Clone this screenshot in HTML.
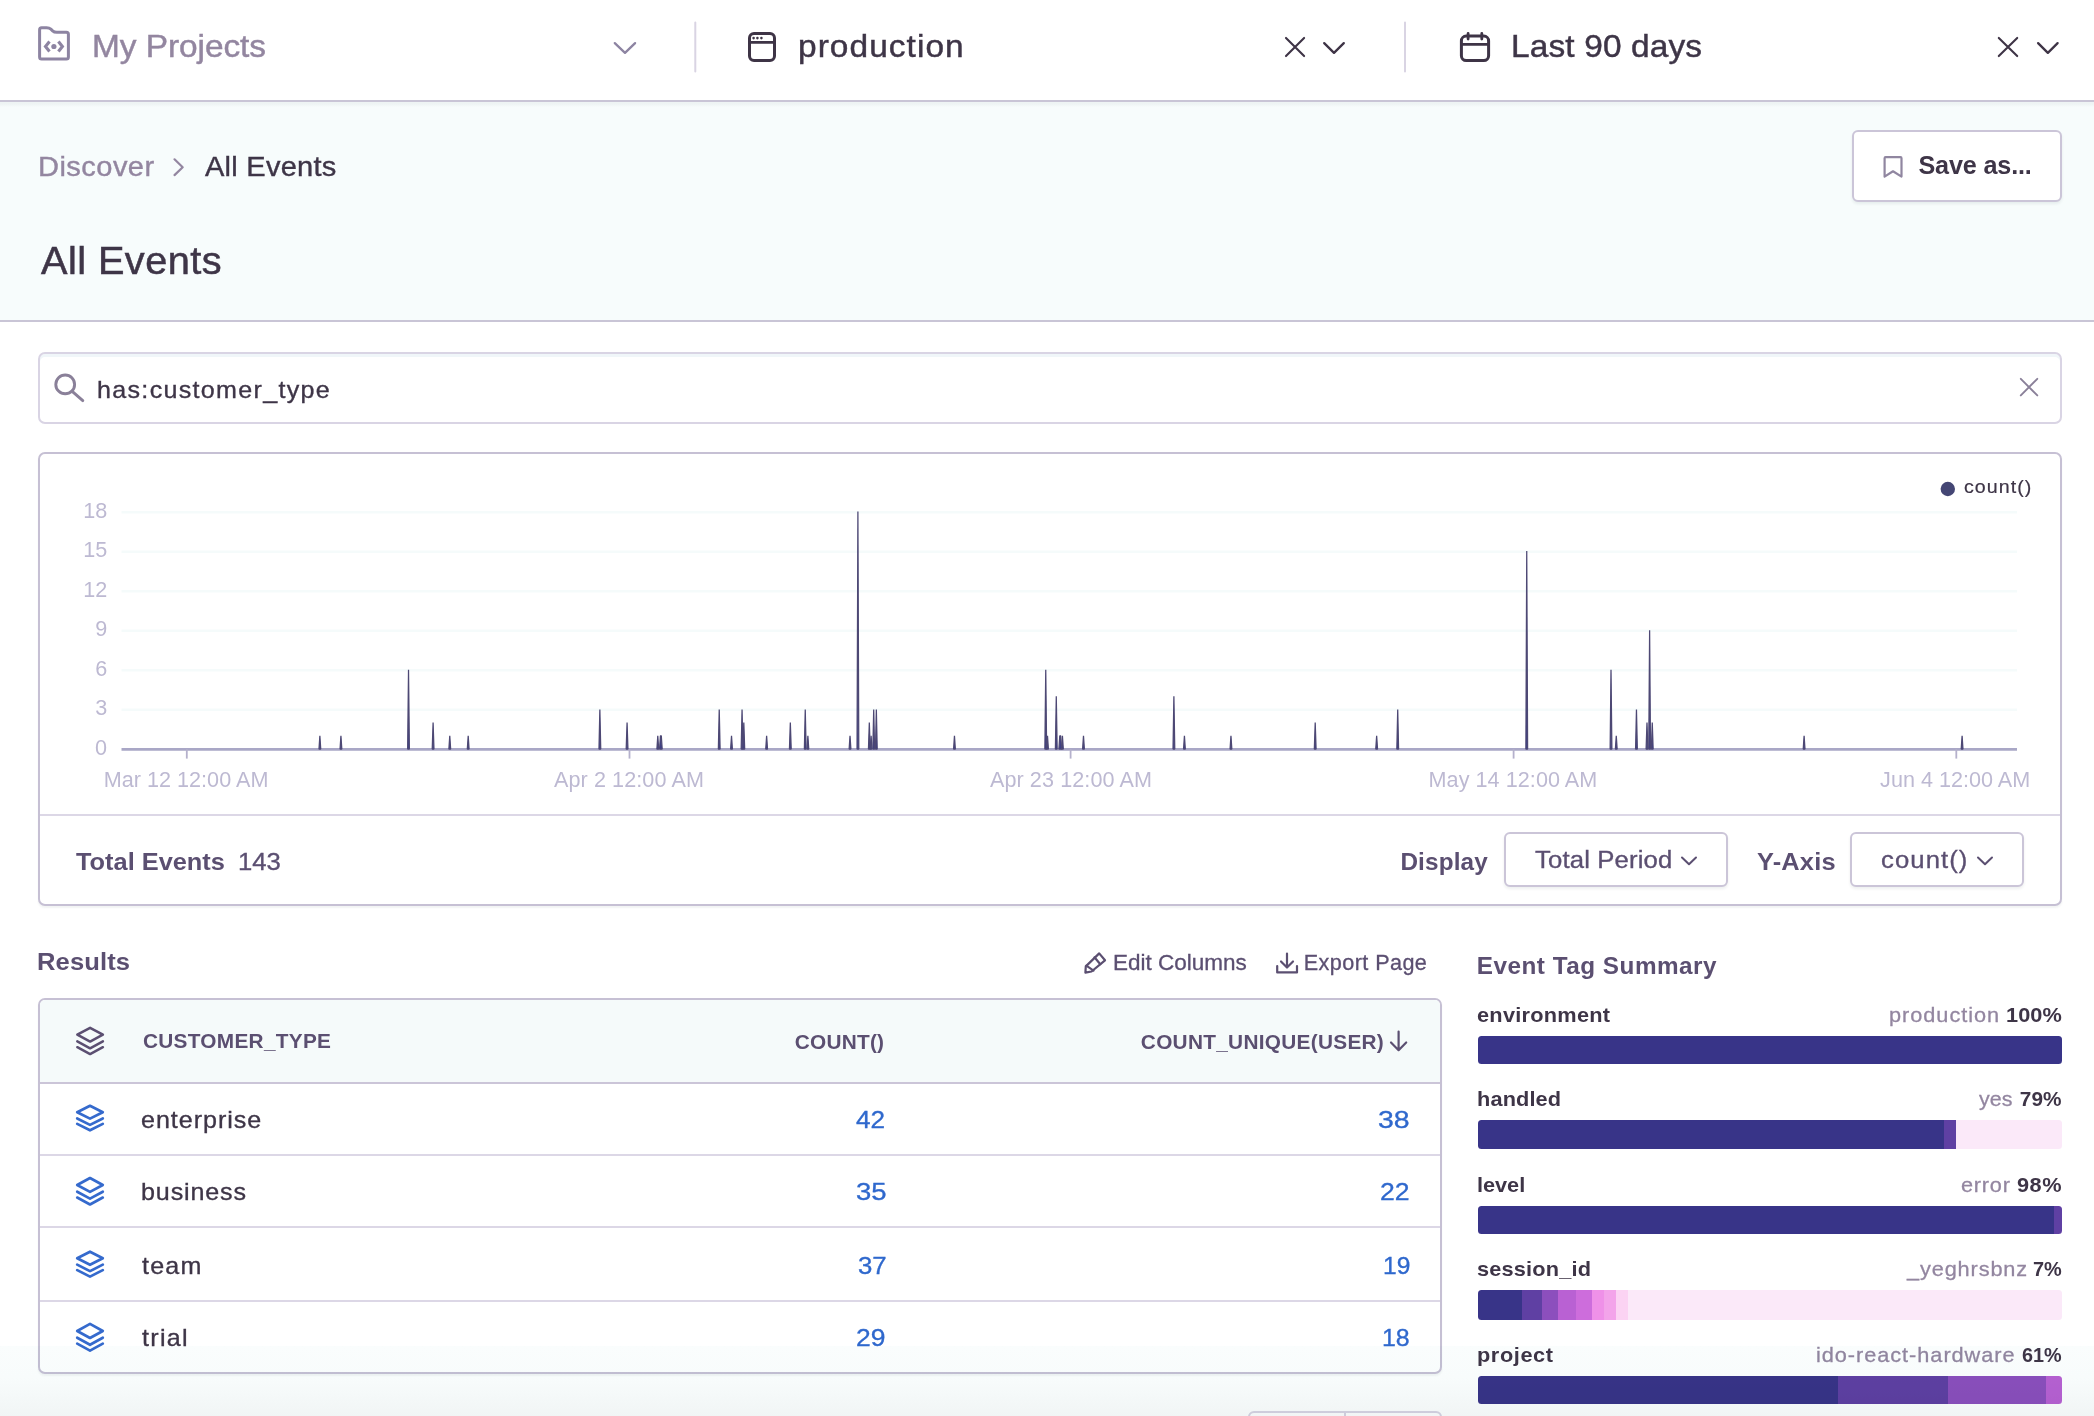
<!DOCTYPE html>
<html lang="en"><head><meta charset="utf-8"><title>Discover - All Events</title>
<style>
html,body{margin:0;padding:0;}
body{width:2094px;height:1416px;position:relative;overflow:hidden;background:#fff;font-family:"Liberation Sans",sans-serif;color:#3e3446;}
.t{position:absolute;white-space:nowrap;line-height:1;margin:0;padding:0;font-weight:normal;}
.abs{position:absolute;}
svg{position:absolute;overflow:visible;}
.box{position:absolute;box-sizing:border-box;}
</style></head><body>
<header class="box" style="left:0;top:0;width:2094px;height:102px;background:#fff;border-bottom:2px solid #c9c5d6;"></header>
<div class="box" style="left:0;top:102px;width:2094px;height:220px;background:linear-gradient(to bottom,#eef4f4 0,#eef4f4 2px,#f7fcfc 5px);background-color:#f7fcfc;border-bottom:2px solid #c9c5d6;"></div>
<nav aria-label="Global selection header">
<svg style="left:0;top:0" width="2094" height="101" fill="none" stroke-linecap="round" stroke-linejoin="round">
<g stroke="#8d84a2" stroke-width="3">
<path d="M39.6 29.8 Q39.6 27.8 41.6 27.8 L46.6 27.8 Q49.3 27.8 50.9 29.2 L52.6 30.8 Q54.2 32.3 56.8 32.3 L66.4 32.3 Q68.4 32.3 68.4 34.3 L68.4 57 Q68.4 59 66.4 59 L41.6 59 Q39.6 59 39.6 57 Z"/>
<path d="M49.5 41.5 L45.5 46.5 L49.5 51.5" stroke-width="3.1" stroke-linecap="butt" stroke-linejoin="miter"/>
<path d="M58.4 41.5 L62.4 46.5 L58.4 51.5" stroke-width="3.1" stroke-linecap="butt" stroke-linejoin="miter"/>
<circle cx="53.9" cy="46.5" r="2.6" fill="#8d84a2" stroke="none"/>
<path d="M614.8 43.1 L625 52.9 L635.1 43.1" stroke-width="2.3"/>
</g>
<g stroke="#3e3446" stroke-width="3">
<rect x="749.5" y="33.5" width="25" height="27" rx="4.5"/>
<path d="M749.5 42.4 H774.5" stroke-width="2.6"/>
<circle cx="753.6" cy="38.1" r="1.3" fill="#3e3446" stroke="none"/><circle cx="757.4" cy="38.1" r="1.3" fill="#3e3446" stroke="none"/><circle cx="761.4" cy="38.1" r="1.3" fill="#3e3446" stroke="none"/>
<path d="M1286 37.9 L1304.1 56.1 M1304.1 37.9 L1286 56.1" stroke-width="2.1"/>
<path d="M1324.2 43.1 L1334 52.9 L1343.8 43.1" stroke-width="2.3"/>
<rect x="1461.4" y="36.1" width="27.2" height="24.5" rx="4.8"/>
<path d="M1461.4 44.4 H1488.4" stroke-width="2.6"/>
<path d="M1468.1 33.4 V39 M1481.8 33.4 V39" stroke-width="2.8"/>
<path d="M1998.8 37.9 L2017.2 56.1 M2017.2 37.9 L1998.8 56.1" stroke-width="2.1"/>
<path d="M2038.1 43.1 L2047.85 52.9 L2057.6 43.1" stroke-width="2.3"/>
</g>
<path d="M695.3 22.5 V71.5 M1405 22.5 V71.5" stroke="#d9d4e3" stroke-width="2"/>
</svg>
<span class="t" style="left:91.76px;top:30.00px;font-size:32px;letter-spacing:-0.057px;-webkit-text-stroke:0.45px #9386a0;transform:scaleX(1.0450);transform-origin:0 0;color:#9386a0;">My Projects</span>
<span class="t" style="left:797.51px;top:30.00px;font-size:32px;letter-spacing:1.007px;-webkit-text-stroke:0.45px #3e3547;transform:scaleX(1.0450);transform-origin:0 0;color:#3e3547;">production</span>
<span class="t" style="left:1510.78px;top:30.00px;font-size:32px;letter-spacing:0.126px;-webkit-text-stroke:0.45px #3e3547;transform:scaleX(1.0450);transform-origin:0 0;color:#3e3547;">Last 90 days</span>
</nav>
<main>
<span class="t" style="left:38.17px;top:152.57px;font-size:27.8px;letter-spacing:0.432px;-webkit-text-stroke:0.39px #9386a0;transform:scaleX(1.0450);transform-origin:0 0;color:#9386a0;">Discover</span>
<svg style="left:0;top:0" width="400" height="300" fill="none" stroke="#9386a0" stroke-width="2.2" stroke-linecap="round" stroke-linejoin="round"><path d="M174.5 159.3 L182.7 167.2 L174.5 175.1"/></svg>
<span class="t" style="left:205.10px;top:152.57px;font-size:27.8px;letter-spacing:0.231px;-webkit-text-stroke:0.39px #3e3547;transform:scaleX(1.0450);transform-origin:0 0;color:#3e3547;">All Events</span>
<h1 class="t" style="left:41.00px;top:242.32px;font-size:38px;letter-spacing:0.423px;-webkit-text-stroke:0.53px #3e3547;transform:scaleX(1.0450);transform-origin:0 0;color:#3e3547;">All Events</h1>
<div class="box" style="left:1852px;top:130px;width:210px;height:72px;background:#fff;border:2px solid #cbc5d8;border-radius:6px;box-shadow:0 2px 3px rgba(40,60,60,0.08);"></div>
<svg style="left:0;top:0" width="2094" height="300" fill="none" stroke="#9086a0" stroke-width="2.2" stroke-linecap="round" stroke-linejoin="round"><path d="M1885.6 157.2 H1900.5 Q1901.5 157.2 1901.5 158.2 V176.6 L1893 171.3 L1884.6 176.6 V158.2 Q1884.6 157.2 1885.6 157.2 Z"/></svg>
<span class="t" style="left:1918.47px;top:152.67px;font-size:25.2px;letter-spacing:-0.159px;font-weight:bold;color:#3e3547;">Save as...</span>
<section aria-label="Search">
<div class="box" style="left:38px;top:352px;width:2024px;height:72px;background:#fff;border:2px solid #d9d4e4;border-radius:7px;box-shadow:inset 0 3px 0 #f0f6f9;"></div>
<svg style="left:0;top:300px" width="2094" height="150" fill="none" stroke="#8a8099" stroke-width="2.9" stroke-linecap="round"><circle cx="65.2" cy="84.4" r="9.4"/><path d="M72.2 91.4 L82.8 100.6"/><path d="M2020.8 78.8 L2037.3 95.4 M2037.3 78.8 L2020.8 95.4" stroke-width="1.9"/></svg>
<span class="t" style="left:96.50px;top:377.68px;font-size:24px;letter-spacing:1.251px;-webkit-text-stroke:0.34px #3e3547;transform:scaleX(1.0450);transform-origin:0 0;color:#3e3547;">has:customer_type</span>
</section>
<section aria-label="Chart">
<div class="box" style="left:38px;top:452px;width:2024px;height:454px;background:#fff;border:2px solid #c6c0d4;border-radius:7px;box-shadow:0 2px 2px rgba(40,60,60,0.06);"></div>
<div class="box" style="left:40px;top:814px;width:2020px;height:2px;background:#dcd7e6;"></div>
<svg style="left:0;top:0" width="2094" height="820" fill="none"><path d="M121.5 709.79 H2017" stroke="#f5fbfb" stroke-width="2.4"/><path d="M121.5 670.28 H2017" stroke="#f5fbfb" stroke-width="2.4"/><path d="M121.5 630.77 H2017" stroke="#f5fbfb" stroke-width="2.4"/><path d="M121.5 591.26 H2017" stroke="#f5fbfb" stroke-width="2.4"/><path d="M121.5 551.75 H2017" stroke="#f5fbfb" stroke-width="2.4"/><path d="M121.5 512.24 H2017" stroke="#f5fbfb" stroke-width="2.4"/>
<path d="M121.5 749.4 H2017" stroke="#a9a7c6" stroke-width="2.6"/><path d="M186.8 749.3 V758.5999999999999" stroke="#b5b1cc" stroke-width="1.8"/><path d="M629.5 749.3 V758.5999999999999" stroke="#b5b1cc" stroke-width="1.8"/><path d="M1070.6 749.3 V758.5999999999999" stroke="#b5b1cc" stroke-width="1.8"/><path d="M1513.6 749.3 V758.5999999999999" stroke="#b5b1cc" stroke-width="1.8"/><path d="M1956.3 749.3 V758.5999999999999" stroke="#b5b1cc" stroke-width="1.8"/>
<g fill="#383c8c" stroke="#4d4874" stroke-width="1.25" stroke-linejoin="bevel"><path d="M318.99 749.0 L319.87 735.80 L320.74 749.0 Z"/><path d="M340.05 749.0 L340.93 735.80 L341.81 749.0 Z"/><path d="M407.64 749.0 L408.52 669.80 L409.39 749.0 Z"/><path d="M432.22 749.0 L433.09 722.60 L433.97 749.0 Z"/><path d="M448.89 749.0 L449.77 735.80 L450.65 749.0 Z"/><path d="M467.32 749.0 L468.20 735.80 L469.08 749.0 Z"/><path d="M598.98 749.0 L599.86 709.40 L600.74 749.0 Z"/><path d="M626.19 749.0 L627.07 722.60 L627.95 749.0 Z"/><path d="M656.91 749.0 L657.79 735.80 L658.67 749.0 Z"/><path d="M659.55 749.0 L660.43 735.80 L661.30 735.80 L662.18 749.0 Z"/><path d="M718.36 749.0 L719.23 709.40 L720.11 749.0 Z"/><path d="M730.64 749.0 L731.52 735.80 L732.40 749.0 Z"/><path d="M741.18 749.0 L742.05 709.40 L742.93 749.0 Z"/><path d="M742.93 749.0 L743.81 722.60 L744.69 749.0 Z"/><path d="M765.75 749.0 L766.63 735.80 L767.51 749.0 Z"/><path d="M789.45 749.0 L790.33 722.60 L791.21 749.0 Z"/><path d="M804.37 749.0 L805.25 709.40 L806.13 749.0 Z"/><path d="M807.01 749.0 L807.88 735.80 L808.76 749.0 Z"/><path d="M849.14 749.0 L850.01 735.80 L850.89 749.0 Z"/><path d="M857.04 749.0 L857.91 511.40 L858.79 749.0 Z"/><path d="M868.45 749.0 L869.32 722.60 L870.20 749.0 Z"/><path d="M870.20 749.0 L871.08 735.80 L871.96 749.0 Z"/><path d="M872.84 749.0 L873.71 709.40 L874.59 749.0 Z"/><path d="M875.47 749.0 L876.35 709.40 L877.22 749.0 Z"/><path d="M953.59 749.0 L954.46 735.80 L955.34 749.0 Z"/><path d="M1044.87 749.0 L1045.75 669.80 L1046.63 749.0 Z"/><path d="M1046.63 749.0 L1047.50 735.80 L1048.38 749.0 Z"/><path d="M1055.40 749.0 L1056.28 696.20 L1057.16 749.0 Z"/><path d="M1058.91 749.0 L1059.79 735.80 L1060.67 735.80 L1061.55 749.0 Z"/><path d="M1061.55 749.0 L1062.42 735.80 L1063.30 749.0 Z"/><path d="M1082.61 749.0 L1083.49 735.80 L1084.37 749.0 Z"/><path d="M1173.02 749.0 L1173.90 696.20 L1174.77 749.0 Z"/><path d="M1183.55 749.0 L1184.43 735.80 L1185.31 749.0 Z"/><path d="M1230.07 749.0 L1230.95 735.80 L1231.83 749.0 Z"/><path d="M1314.33 749.0 L1315.21 722.60 L1316.09 749.0 Z"/><path d="M1375.77 749.0 L1376.65 735.80 L1377.53 749.0 Z"/><path d="M1396.84 749.0 L1397.72 709.40 L1398.59 749.0 Z"/><path d="M1525.87 749.0 L1526.74 551.00 L1527.62 749.0 Z"/><path d="M1610.13 749.0 L1611.00 669.80 L1611.88 749.0 Z"/><path d="M1615.39 749.0 L1616.27 735.80 L1617.15 749.0 Z"/><path d="M1635.58 749.0 L1636.46 709.40 L1637.34 749.0 Z"/><path d="M1646.11 749.0 L1646.99 722.60 L1647.87 749.0 Z"/><path d="M1648.75 749.0 L1649.62 630.20 L1650.50 749.0 Z"/><path d="M1651.38 749.0 L1652.26 722.60 L1653.14 749.0 Z"/><path d="M1803.23 749.0 L1804.10 735.80 L1804.98 749.0 Z"/><path d="M1961.22 749.0 L1962.10 735.80 L1962.97 749.0 Z"/></g>
<circle cx="1947.8" cy="489" r="7.2" fill="#444674"/>
</svg>
<span class="t" style="left:95.05px;top:737.08px;font-size:21.6px;color:#bdb9d2;">0</span>
<span class="t" style="left:95.17px;top:696.81px;font-size:21.6px;color:#bdb9d2;">3</span>
<span class="t" style="left:95.17px;top:658.04px;font-size:21.6px;color:#bdb9d2;">6</span>
<span class="t" style="left:95.30px;top:617.79px;font-size:21.6px;color:#bdb9d2;">9</span>
<span class="t" style="left:83.29px;top:578.78px;font-size:21.6px;color:#bdb9d2;">12</span>
<span class="t" style="left:83.16px;top:538.77px;font-size:21.6px;color:#bdb9d2;">15</span>
<span class="t" style="left:83.16px;top:499.97px;font-size:21.6px;color:#bdb9d2;">18</span>
<span class="t" style="left:103.66px;top:768.72px;font-size:21.6px;letter-spacing:0.024px;color:#bdb9d2;">Mar 12 12:00 AM</span>
<span class="t" style="left:553.92px;top:768.72px;font-size:21.6px;letter-spacing:0.093px;color:#bdb9d2;">Apr 2 12:00 AM</span>
<span class="t" style="left:989.91px;top:768.72px;font-size:21.6px;letter-spacing:0.087px;color:#bdb9d2;">Apr 23 12:00 AM</span>
<span class="t" style="left:1428.55px;top:768.72px;font-size:21.6px;letter-spacing:0.051px;color:#bdb9d2;">May 14 12:00 AM</span>
<span class="t" style="left:1880.10px;top:768.72px;font-size:21.6px;color:#bdb9d2;">Jun 4 12:00 AM</span>
<span class="t" style="left:1964.12px;top:477.69px;font-size:18.8px;letter-spacing:0.994px;-webkit-text-stroke:0.20px #3e3547;transform:scaleX(1.0450);transform-origin:0 0;color:#3e3547;">count()</span>
<span class="t" style="left:76.24px;top:849.88px;font-size:24.3px;font-weight:bold;transform:scaleX(1.0436);transform-origin:0 0;color:#5b4f71;">Total Events</span>
<span class="t" style="left:238.24px;top:849.51px;font-size:24.2px;-webkit-text-stroke:0.34px #5b4f71;transform:scaleX(1.0619);transform-origin:0 0;color:#5b4f71;">143</span>
<span class="t" style="left:1400.38px;top:849.95px;font-size:24.3px;letter-spacing:0.167px;font-weight:bold;color:#5b4f71;">Display</span>
<span class="t" style="left:1757.47px;top:850.18px;font-size:24.3px;letter-spacing:0.171px;font-weight:bold;transform:scaleX(1.0450);transform-origin:0 0;color:#5b4f71;">Y-Axis</span>
<div class="box" style="left:1504px;top:832px;width:224px;height:55px;background:#fff;border:2px solid #cbc5d8;border-radius:6px;box-shadow:0 2px 3px rgba(40,60,60,0.08);"></div>
<div class="box" style="left:1850px;top:832px;width:174px;height:55px;background:#fff;border:2px solid #cbc5d8;border-radius:6px;box-shadow:0 2px 3px rgba(40,60,60,0.08);"></div>
<span class="t" style="left:1534.58px;top:847.54px;font-size:24.6px;letter-spacing:0.136px;-webkit-text-stroke:0.34px #5b4f71;transform:scaleX(1.0450);transform-origin:0 0;color:#5b4f71;">Total Period</span>
<span class="t" style="left:1881.05px;top:848.08px;font-size:24.6px;letter-spacing:1.028px;-webkit-text-stroke:0.34px #5b4f71;transform:scaleX(1.0450);transform-origin:0 0;color:#5b4f71;">count()</span>
<svg style="left:0;top:800px" width="2094" height="120" fill="none" stroke="#5b4f71" stroke-width="2" stroke-linecap="round" stroke-linejoin="round"><path d="M1682 57.5 L1689 64.3 L1696 57.5"/><path d="M1978 57.5 L1985 64.3 L1992 57.5"/></svg>
</section>
<section aria-label="Results">
<h2 class="t" style="left:36.79px;top:950.49px;font-size:24.6px;letter-spacing:0.101px;font-weight:bold;transform:scaleX(1.0393);transform-origin:0 0;color:#5b4f71;">Results</h2>
<svg style="left:0;top:900px" width="2094" height="100" fill="none" stroke="#5b4f71" stroke-width="2.2" stroke-linecap="round" stroke-linejoin="round">
<path d="M1099.2 53.4 L1105 60.3 L1091.5 71.5 L1085.4 72.6 L1085.8 66.4 Z"/><path d="M1094.5 57.3 L1100.3 64.2"/><path d="M1086.3 65.6 L1093.6 70.6" stroke-width="2"/>
<path d="M1287 53.5 V67 M1281 61.5 L1287 67.5 L1293 61.5"/><path d="M1277.2 66 V72.4 H1297 V66"/>
</svg>
<span class="t" style="left:1112.98px;top:951.82px;font-size:21.6px;-webkit-text-stroke:0.30px #5b4f71;transform:scaleX(1.0419);transform-origin:0 0;color:#5b4f71;">Edit Columns</span>
<span class="t" style="left:1303.75px;top:951.82px;font-size:21.6px;letter-spacing:0.427px;-webkit-text-stroke:0.30px #5b4f71;color:#5b4f71;">Export Page</span>
<h2 class="t" style="left:1476.78px;top:954.06px;font-size:24.3px;letter-spacing:0.502px;font-weight:bold;color:#5b4f71;">Event Tag Summary</h2>
<div class="box" style="left:38px;top:998px;width:1404px;height:376px;background:#fff;border:2px solid #c6c0d4;border-radius:7px;box-shadow:0 2px 2px rgba(40,60,60,0.06);overflow:hidden;"><div style="height:82px;background:#f5fafa;border-bottom:2px solid #cbc5d8;"></div></div>
<div class="box" style="left:40px;top:1154.1px;width:1400px;height:2px;background:#dcd7e6;"></div>
<div class="box" style="left:40px;top:1226.1px;width:1400px;height:2px;background:#dcd7e6;"></div>
<div class="box" style="left:40px;top:1299.6px;width:1400px;height:2px;background:#dcd7e6;"></div>
<svg style="left:0;top:0" width="1460" height="1416"><g stroke="#5b4f71" stroke-width="2.5" fill="none" stroke-linejoin="round" stroke-linecap="round"><path d="M90.1 1027.80 L102.89999999999999 1034.70 L90.1 1041.60 L77.3 1034.70 Z"/><path d="M77.3 1041.40 L90.1 1048.30 L102.89999999999999 1041.40"/><path d="M77.3 1047.20 L90.1 1054.10 L102.89999999999999 1047.20"/></g><g stroke="#356acd" stroke-width="2.7" fill="none" stroke-linejoin="round" stroke-linecap="round"><path d="M90.0 1105.78 L102.8 1112.21 L90.0 1118.64 L77.2 1112.21 Z"/><path d="M77.2 1118.46 L90.0 1124.89 L102.8 1118.46"/><path d="M77.2 1123.86 L90.0 1130.29 L102.8 1123.86"/></g><g stroke="#356acd" stroke-width="2.7" fill="none" stroke-linejoin="round" stroke-linecap="round"><path d="M90.0 1178.01 L102.8 1184.96 L90.0 1191.91 L77.2 1184.96 Z"/><path d="M77.2 1191.70 L90.0 1198.65 L102.8 1191.70"/><path d="M77.2 1197.54 L90.0 1204.49 L102.8 1197.54"/></g><g stroke="#356acd" stroke-width="2.7" fill="none" stroke-linejoin="round" stroke-linecap="round"><path d="M90.0 1251.71 L102.8 1258.26 L90.0 1264.81 L77.2 1258.26 Z"/><path d="M77.2 1264.62 L90.0 1271.17 L102.8 1264.62"/><path d="M77.2 1270.12 L90.0 1276.67 L102.8 1270.12"/></g><g stroke="#356acd" stroke-width="2.7" fill="none" stroke-linejoin="round" stroke-linecap="round"><path d="M90.0 1323.93 L102.8 1330.95 L90.0 1337.96 L77.2 1330.95 Z"/><path d="M77.2 1337.76 L90.0 1344.78 L102.8 1337.76"/><path d="M77.2 1343.66 L90.0 1350.68 L102.8 1343.66"/></g><path d="M1398.6 1031.5 V1050 M1391 1042.5 L1398.6 1050.2 L1406.2 1042.5" stroke="#5b4f71" stroke-width="2.2" fill="none" stroke-linecap="round" stroke-linejoin="round"/></svg>
<span class="t" style="left:142.95px;top:1030.89px;font-size:20.8px;letter-spacing:0.289px;font-weight:bold;color:#5b4f71;">CUSTOMER_TYPE</span>
<span class="t" style="left:794.75px;top:1031.68px;font-size:20.8px;letter-spacing:0.247px;font-weight:bold;color:#5b4f71;">COUNT()</span>
<span class="t" style="left:1140.85px;top:1031.68px;font-size:20.8px;letter-spacing:0.290px;font-weight:bold;color:#5b4f71;">COUNT_UNIQUE(USER)</span>
<span class="t" style="left:140.76px;top:1107.68px;font-size:24px;letter-spacing:0.929px;-webkit-text-stroke:0.34px #3e3547;transform:scaleX(1.0450);transform-origin:0 0;color:#3e3547;">enterprise</span>
<span class="t" style="left:855.64px;top:1108.36px;font-size:24.4px;-webkit-text-stroke:0.34px #2f68cd;transform:scaleX(1.0716);transform-origin:0 0;color:#2f68cd;">42</span>
<span class="t" style="left:1378.48px;top:1108.47px;font-size:24.4px;-webkit-text-stroke:0.34px #2f68cd;transform:scaleX(1.1651);transform-origin:0 0;color:#2f68cd;">38</span>
<span class="t" style="left:140.95px;top:1179.88px;font-size:24px;letter-spacing:0.829px;-webkit-text-stroke:0.34px #3e3547;transform:scaleX(1.0450);transform-origin:0 0;color:#3e3547;">business</span>
<span class="t" style="left:855.52px;top:1179.55px;font-size:24.4px;-webkit-text-stroke:0.34px #2f68cd;transform:scaleX(1.1256);transform-origin:0 0;color:#2f68cd;">35</span>
<span class="t" style="left:1379.73px;top:1179.55px;font-size:24.4px;-webkit-text-stroke:0.34px #2f68cd;transform:scaleX(1.0893);transform-origin:0 0;color:#2f68cd;">22</span>
<span class="t" style="left:142.07px;top:1254.43px;font-size:24px;letter-spacing:1.131px;-webkit-text-stroke:0.34px #3e3547;transform:scaleX(1.0450);transform-origin:0 0;color:#3e3547;">team</span>
<span class="t" style="left:857.58px;top:1254.09px;font-size:24.4px;-webkit-text-stroke:0.34px #2f68cd;transform:scaleX(1.0571);transform-origin:0 0;color:#2f68cd;">37</span>
<span class="t" style="left:1382.74px;top:1254.09px;font-size:24.4px;-webkit-text-stroke:0.34px #2f68cd;transform:scaleX(1.0074);transform-origin:0 0;color:#2f68cd;">19</span>
<span class="t" style="left:142.07px;top:1325.58px;font-size:24px;letter-spacing:1.245px;-webkit-text-stroke:0.34px #3e3547;transform:scaleX(1.0450);transform-origin:0 0;color:#3e3547;">trial</span>
<span class="t" style="left:855.74px;top:1326.28px;font-size:24.4px;-webkit-text-stroke:0.34px #2f68cd;transform:scaleX(1.0838);transform-origin:0 0;color:#2f68cd;">29</span>
<span class="t" style="left:1382.21px;top:1326.28px;font-size:24.4px;-webkit-text-stroke:0.34px #2f68cd;transform:scaleX(1.0227);transform-origin:0 0;color:#2f68cd;">18</span>
</section>
<aside aria-label="Event Tag Summary">
<span class="t" style="left:1477.12px;top:1005.14px;font-size:20.8px;letter-spacing:0.252px;font-weight:bold;transform:scaleX(1.0450);transform-origin:0 0;color:#3e3547;">environment</span>
<span class="t" style="left:2005.79px;top:1005.14px;font-size:20.8px;letter-spacing:0.074px;font-weight:bold;transform:scaleX(1.0450);transform-origin:0 0;color:#3e3547;">100%</span>
<span class="t" style="left:1888.99px;top:1005.25px;font-size:20.8px;letter-spacing:0.921px;-webkit-text-stroke:0.29px #9386a0;transform:scaleX(1.0450);transform-origin:0 0;color:#9386a0;">production</span>
<div class="box" style="left:1478px;top:1036px;width:584px;height:28px;border-radius:3.5px;background:#fbe9f9;overflow:hidden;display:flex;"><div style="width:100%;height:100%;background:#383488;"></div></div>
<span class="t" style="left:1477.27px;top:1088.76px;font-size:20.8px;letter-spacing:0.127px;font-weight:bold;transform:scaleX(1.0450);transform-origin:0 0;color:#3e3547;">handled</span>
<span class="t" style="left:2019.83px;top:1088.76px;font-size:20.8px;letter-spacing:0.070px;font-weight:bold;color:#3e3547;">79%</span>
<span class="t" style="left:1979.10px;top:1088.87px;font-size:20.8px;-webkit-text-stroke:0.29px #9386a0;transform:scaleX(1.0310);transform-origin:0 0;color:#9386a0;">yes</span>
<div class="box" style="left:1478px;top:1120px;width:584px;height:29px;border-radius:3.5px;background:#fbe9f9;overflow:hidden;display:flex;"><div style="width:79.8%;height:100%;background:#383488;"></div><div style="width:2.04%;height:100%;background:#5f40a3;"></div></div>
<span class="t" style="left:1477.27px;top:1175.14px;font-size:20.8px;letter-spacing:-0.035px;font-weight:bold;transform:scaleX(1.0450);transform-origin:0 0;color:#3e3547;">level</span>
<span class="t" style="left:2017.15px;top:1175.14px;font-size:20.8px;letter-spacing:0.463px;font-weight:bold;transform:scaleX(1.0450);transform-origin:0 0;color:#3e3547;">98%</span>
<span class="t" style="left:1961.29px;top:1175.14px;font-size:20.8px;letter-spacing:0.727px;-webkit-text-stroke:0.29px #9386a0;transform:scaleX(1.0450);transform-origin:0 0;color:#9386a0;">error</span>
<div class="box" style="left:1478px;top:1206px;width:584px;height:28px;border-radius:3.5px;background:#fbe9f9;overflow:hidden;display:flex;"><div style="width:98.6%;height:100%;background:#383488;"></div><div style="width:1.4%;height:100%;background:#5f40a3;"></div></div>
<span class="t" style="left:1477.25px;top:1259.03px;font-size:20.8px;letter-spacing:0.180px;font-weight:bold;transform:scaleX(1.0450);transform-origin:0 0;color:#3e3547;">session_id</span>
<span class="t" style="left:2032.76px;top:1258.90px;font-size:20.8px;font-weight:bold;transform:scaleX(0.9584);transform-origin:0 0;color:#3e3547;">7%</span>
<span class="t" style="left:1906.91px;top:1259.09px;font-size:20.8px;letter-spacing:0.831px;-webkit-text-stroke:0.29px #9386a0;transform:scaleX(1.0450);transform-origin:0 0;color:#9386a0;">_yeghrsbnz</span>
<div class="box" style="left:1478px;top:1290px;width:584px;height:30px;border-radius:3.5px;background:#fbe9f9;overflow:hidden;display:flex;"><div style="width:7.53%;height:100%;background:#383488;"></div><div style="width:3.42%;height:100%;background:#5f40a3;"></div><div style="width:2.72%;height:100%;background:#8c4fbd;"></div><div style="width:3.12%;height:100%;background:#b961d3;"></div><div style="width:2.7%;height:100%;background:#cd6ddc;"></div><div style="width:2.04%;height:100%;background:#ef91e8;"></div><div style="width:2.12%;height:100%;background:#f3a4ea;"></div><div style="width:1.97%;height:100%;background:#fbd3f3;"></div></div>
<span class="t" style="left:1476.83px;top:1344.87px;font-size:20.8px;letter-spacing:0.563px;font-weight:bold;transform:scaleX(1.0450);transform-origin:0 0;color:#3e3547;">project</span>
<span class="t" style="left:2022.09px;top:1344.76px;font-size:20.8px;font-weight:bold;transform:scaleX(0.9533);transform-origin:0 0;color:#3e3547;">61%</span>
<span class="t" style="left:1815.56px;top:1344.76px;font-size:20.8px;letter-spacing:0.910px;-webkit-text-stroke:0.29px #9386a0;transform:scaleX(1.0450);transform-origin:0 0;color:#9386a0;">ido-react-hardware</span>
<div class="box" style="left:1478px;top:1376px;width:584px;height:28px;border-radius:3.5px;background:#fbe9f9;overflow:hidden;display:flex;"><div style="width:61.7%;height:100%;background:#383488;"></div><div style="width:18.8%;height:100%;background:#5f40a3;"></div><div style="width:16.7%;height:100%;background:#8c4fbd;"></div><div style="width:2.8%;height:100%;background:#b961d3;"></div></div>
</aside>
<div class="box" style="left:1248px;top:1411px;width:194px;height:60px;background:#fff;border:2px solid #d9d5e4;border-radius:6px;"></div>
<div class="box" style="left:1344px;top:1411px;width:2px;height:10px;background:#d9d5e4;"></div>
<div class="box" style="left:0;top:1346px;width:2094px;height:70px;background:linear-gradient(to bottom, #fafdfd 0, #f8fcfc 45%, #f1f5f5 100%);mix-blend-mode:multiply;"></div>
</main>
</body></html>
